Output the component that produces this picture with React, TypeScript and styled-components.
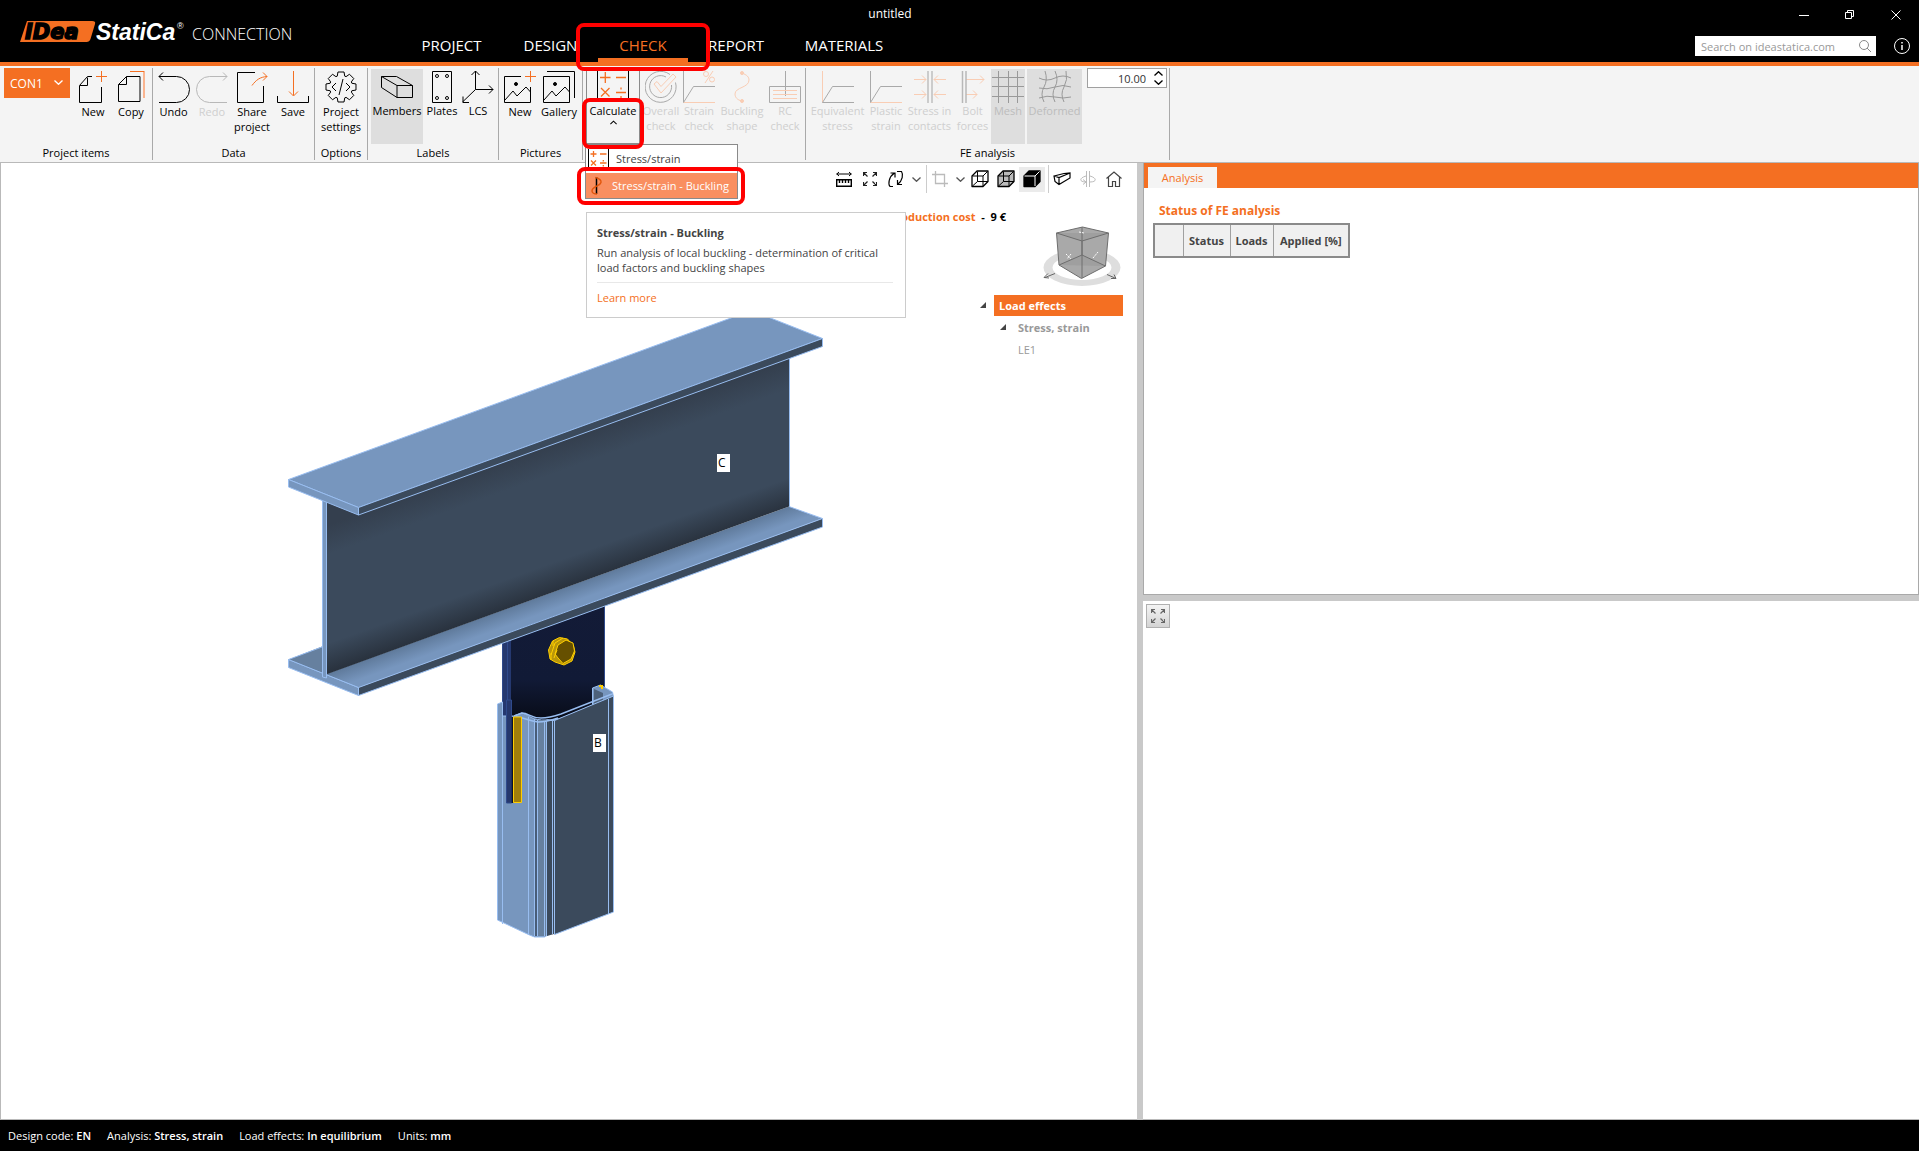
import React from "react";
import styled, { createGlobalStyle, css } from "styled-components";

const ORANGE = "#f46f22";
const PALE = "#f9cdb4";
const GREY = "#a9a9a9";

const GlobalStyle = createGlobalStyle`
  *, *::before, *::after { box-sizing: border-box; }
  body { margin: 0; background: #fff; font-family: "Open Sans", "Noto Sans", sans-serif; font-size: 11px; line-height: 15px; color: #000; }
  button, input, select { font: inherit; color: inherit; }
  button { border: 0; padding: 0; background: none; cursor: pointer; }
  a { color: inherit; text-decoration: none; }
  svg { display: block; }
`;

const Page = styled.div`
  display: flex;
  flex-direction: column;
  height: 100vh;
  overflow: hidden;
`;

/* ---------- title bar ---------- */

const Header = styled.header`
  flex: none;
  display: grid;
  grid-template-columns: 400px 1fr 539px;
  height: 66px;
  background: #000;
  color: #fff;
  border-bottom: 4px solid ${ORANGE};
`;

const Brand = styled.div`
  display: flex;
  align-items: center;
  gap: 6px;
  padding: 6px 0 0 20px;
`;

const ProductName = styled.span`
  font-size: 16px;
  line-height: 20px;
  font-weight: 300;
`;

const HeaderCentre = styled.div`
  display: flex;
  flex-direction: column;
  justify-content: space-between;
`;

const DocTitle = styled.div`
  padding-top: 6px;
  text-align: center;
  font-size: 12px;
  line-height: 16px;
`;

const Tabs = styled.nav`
  display: flex;
`;

const Tab = styled.a<{ $width: number; $active?: boolean }>`
  position: relative;
  flex: none;
  width: ${(p) => p.$width}px;
  height: 32px;
  padding-top: 4px;
  text-align: center;
  font-size: 15px;
  line-height: 22px;
  color: ${(p) => (p.$active ? ORANGE : "#fff")};
  border-bottom: 4px solid ${(p) => (p.$active ? ORANGE : "transparent")};
`;

const HeaderRight = styled.div`
  display: flex;
  flex-direction: column;
  align-items: flex-end;
`;

const WindowButtons = styled.div`
  display: flex;
`;

const WindowButton = styled.button`
  display: grid;
  place-items: center;
  width: 46px;
  height: 30px;
  color: #fff;
`;

const SearchRow = styled.div`
  display: flex;
  align-items: center;
  gap: 17px;
  padding: 6px 8px 0 0;
`;

const SearchBox = styled.label`
  display: flex;
  align-items: center;
  width: 181px;
  height: 20px;
  padding: 0 5px 0 6px;
  background: #fff;
  color: #999;
`;

const SearchInput = styled.input`
  flex: 1;
  min-width: 0;
  border: 0;
  padding: 0;
  outline: 0;
  background: none;
  &::placeholder { color: #999; opacity: 1; }
`;

/* ---------- ribbon ---------- */

const Ribbon = styled.div`
  flex: none;
  display: flex;
  height: 97px;
  padding-top: 2px;
  background: #f4f4f4;
  border-bottom: 1px solid #b9b9b9;
`;

const Group = styled.section<{ $width: number }>`
  flex: none;
  display: flex;
  flex-direction: column;
  justify-content: space-between;
  width: ${(p) => p.$width}px;
  height: 92px;
  border-right: 1px solid #a9a9a9;
`;

const GroupBody = styled.div<{ $pad?: number }>`
  display: flex;
  padding-left: ${(p) => p.$pad ?? 4}px;
`;

const GroupLabel = styled.div`
  text-align: center;
`;

const ToolButton = styled.button<{ $width: number; $active?: boolean; $disabled?: boolean; $tight?: boolean; $open?: boolean }>`
  position: relative;
  flex: none;
  display: flex;
  flex-direction: column;
  align-items: center;
  width: ${(p) => p.$width}px;
  height: 75px;
  margin-top: 1px;
  padding-top: 2px;
  gap: ${(p) => (p.$open ? 2 : p.$tight ? 0 : 1)}px;
  color: ${(p) => (p.$disabled ? (p.$active ? "#bcbcbc" : "#cfcfcf") : "#000")};
  background: ${(p) => (p.$active ? "#dedede" : "none")};
  svg { flex: none; }
  ${(p) =>
    p.$open &&
    css`
      border: solid #8a8a8a;
      border-width: 0 1px 1px;
    `}
`;

const ToolLabel = styled.span`
  white-space: pre;
  text-align: center;
`;

const Gap = styled.div<{ $width: number }>`
  flex: none;
  width: ${(p) => p.$width}px;
`;

const ItemPicker = styled.label`
  position: relative;
  width: 66px;
  height: 30px;
  color: #fff;
  background: ${ORANGE};
  svg { position: absolute; right: 7px; top: 12px; pointer-events: none; }
`;

const ItemSelect = styled.select`
  appearance: none;
  width: 100%;
  height: 100%;
  border: 0;
  padding: 0 6px;
  background: none;
  font-size: 12px;
`;

const NumberField = styled.div`
  display: flex;
  align-items: center;
  width: 80px;
  height: 20px;
  margin-left: 5px;
  padding-right: 3px;
  background: #fff;
  border: 1px solid #a0a0a0;
`;

const NumberInput = styled.input`
  flex: 1;
  min-width: 0;
  border: 0;
  padding: 0 8px 0 0;
  outline: 0;
  background: none;
  text-align: right;
  font-size: 11px;
  color: #333;
`;

const Spin = styled.div`
  display: flex;
  flex-direction: column;
  gap: 4px;
`;

/* ---------- drop-down of the Calculate button ---------- */

const CalcWrap = styled.div`
  position: relative;
  flex: none;
`;

const Menu = styled.div`
  position: absolute;
  z-index: 5;
  top: 76px;
  left: -1px;
  width: 153px;
  background: #fff;
  border: 1px solid #8a8a8a;
`;

const MenuItem = styled.button<{ $active?: boolean }>`
  position: relative;
  display: flex;
  align-items: center;
  gap: 6px;
  width: 100%;
  height: ${(p) => (p.$active ? 25 : 28)}px;
  padding: ${(p) => (p.$active ? 0 : "0 0 2px 2px")};
  white-space: nowrap;
  color: ${(p) => (p.$active ? "#fff" : "#444")};
  background: ${(p) => (p.$active ? "#f98f60" : "#fff")};
`;

const Tooltip = styled.div`
  position: absolute;
  z-index: 4;
  top: 144px;
  left: 0;
  width: 320px;
  height: 106px;
  padding: 12px 12px 0 10px;
  background: #fff;
  border: 1px solid #ccc;
  color: #444;
`;

const TipTitle = styled.div`
  font-weight: 700;
  margin-bottom: 5px;
`;

const TipText = styled.p`
  margin: 0 0 7px;
  padding-bottom: 7px;
  border-bottom: 1px solid #e8e8e8;
`;

const TipLink = styled.a`
  color: ${ORANGE};
`;

/* Red frame that marks a step of the walkthrough. */
const Callout = styled.span<{ $inset: string }>`
  position: absolute;
  z-index: 6;
  inset: ${(p) => p.$inset};
  border: 4px solid #f00;
  border-radius: 8px;
  pointer-events: none;
`;

/* ---------- work area ---------- */

const Work = styled.main`
  flex: 1;
  min-height: 0;
  display: grid;
  grid-template-columns: minmax(0, 1137fr) 6px minmax(0, 776fr);
`;

const Viewport = styled.section`
  position: relative;
  display: flex;
  flex-direction: column;
  align-items: flex-end;
  overflow: hidden;
  border-left: 1px solid #b9b9b9;
  border-bottom: 1px solid #b9b9b9;
`;

const Scene = styled.svg`
  position: absolute;
  left: 0;
  top: 0;
`;

const Splitter = styled.div`
  background: #c9c9c9;
`;

const ViewTools = styled.div`
  display: flex;
  align-items: center;
  padding-right: 10px;
  height: 32px;
`;

const ViewButton = styled.button<{ $narrow?: boolean; $active?: boolean }>`
  display: grid;
  place-items: center;
  width: ${(p) => (p.$narrow ? 14 : 26)}px;
  height: 25px;
  background: ${(p) => (p.$active ? "#ebebeb" : "none")};
`;

const Divider = styled.div`
  width: 1px;
  height: 28px;
  margin-left: 3px;
  background: #ccc;
`;

const Cost = styled.div`
  margin: 14px 131px 0 0;
  font-weight: 700;
  line-height: 16px;
  white-space: pre;
`;

const CostName = styled.span`
  color: ${ORANGE};
`;

const CubeHolder = styled.div`
  margin: 1px 15px 6px 0;
`;

const Tree = styled.ul`
  list-style: none;
  width: 143px;
  margin: 0 14px 0 0;
  padding: 0;
  line-height: 21px;
`;

const TreeRow = styled.li<{ $indent: number }>`
  display: flex;
  align-items: center;
  gap: ${(p) => (p.$indent ? 12 : 8)}px;
  height: 22px;
  padding-left: ${(p) => p.$indent}px;
  color: #999;
`;

const TreeHead = styled.span`
  flex: 1;
  padding-left: 5px;
  font-weight: 700;
  color: #fff;
  background: ${ORANGE};
`;

const TreeBold = styled.span`
  font-weight: 700;
`;

const Side = styled.aside`
  display: grid;
  grid-template-rows: 432px 6px 1fr;
  border-bottom: 1px solid #b9b9b9;
`;

const AnalysisPane = styled.section`
  border: solid #a9a9a9;
  border-width: 0 1px 1px;
`;

const PaneTabs = styled.div`
  height: 25px;
  padding: 4px 0 0 4px;
  background: ${ORANGE};
`;

const PaneTab = styled.button`
  width: 69px;
  height: 21px;
  color: ${ORANGE};
  background: #f4f4f4;
`;

const PaneTitle = styled.h2`
  margin: 14px 0 4px 15px;
  font-size: 12px;
  line-height: 17px;
  color: ${ORANGE};
`;

const StatusTable = styled.table`
  margin-left: 9px;
  border-collapse: collapse;
  border: 2px solid #8a8a8a;
  table-layout: fixed;
  width: 196px;
`;

const Th = styled.th<{ $width: number }>`
  width: ${(p) => p.$width}px;
  height: 33px;
  padding: 0;
  border: 1px solid #a0a0a0;
  color: #444;
  background: #f0f0f0;
`;

const DetailPane = styled.section`
  padding: 3px;
`;

const FitButton = styled.button`
  display: grid;
  place-items: center;
  width: 24px;
  height: 24px;
  border: 1px solid #b0b0b0;
  background: linear-gradient(#f4f4f4, #d4d4d4);
`;

const StatusBar = styled.footer`
  flex: none;
  display: flex;
  align-items: center;
  gap: 16px;
  height: 31px;
  padding-left: 8px;
  color: #fff;
  b { font-weight: 600; }
  background: #000;
`;

/* ---------- icons ---------- */

type IconProps = { w?: number; h?: number; c?: string; children: React.ReactNode };
const Icon = ({ w = 32, h = 32, c = "#000", children }: IconProps) => (
  <svg width={w} height={h} viewBox={`0 0 ${w} ${h}`} fill="none" stroke={c} aria-hidden="true">
    {children}
  </svg>
);

const Chevron = ({ up, w = 9, c = "currentColor" }: { up?: boolean; w?: number; c?: string }) => (
  <svg width={w} height={5} viewBox="0 0 9 5" fill="none" stroke={c} strokeWidth={1.3} aria-hidden="true">
    <path d={up ? "M.5 4.5 4.5.7 8.5 4.5" : "M.5.5 4.5 4.3 8.5.5"} />
  </svg>
);

const NewIcon = () => (
  <Icon>
    <path d="M24.5 16v15.500h-22v-17l8-9h4.500M3 14.500h7.500v-8" />
    <path stroke={ORANGE} d="M24.500 0v11M19 5.500h11" />
  </Icon>
);
const CopyIcon = () => (
  <Icon>
    <path d="M3.500 13.500 11.500 5.500h13.500v25h-21.500zM3.500 13.500h8v-8" />
    <path stroke={ORANGE} d="M15 .5h14.500" />
    <path stroke="#fab48f" strokeWidth="2" d="M29 1v26" />
  </Icon>
);
const UndoIcon = () => (
  <Icon>
    <path d="M1 31.500h17.500a13 13 0 0 0 0-26H1M5 1.500l-4 4 4 4" />
  </Icon>
);
const RedoIcon = () => (
  <Icon c="#b8b8b8">
    <path d="M31 31.500H13.500a13 13 0 0 1 0-26H31M27 1.500l4 4-4 4" />
  </Icon>
);
const ShareIcon = () => (
  <Icon>
    <path d="M19 1.500H1.500v30h26V15" />
    <path stroke={ORANGE} d="M16 14.500C20 9 24 6 31 5.500M27 1.500l4 4-4 4" />
  </Icon>
);
const SaveIcon = () => (
  <Icon>
    <path d="M.5 25v6.500h31V25" />
    <path stroke={ORANGE} d="M16.500 0v24.500M12 20.500l4.500 4.500 4.500-4.500" />
  </Icon>
);
const GearIcon = () => {
  const pts: string[] = [];
  for (let i = 0; i < 8; i++) {
    const a = (i * Math.PI) / 4;
    [[-0.33, 11.5], [-0.2, 15.3], [0.2, 15.3], [0.33, 11.5]].forEach(([d, r]) =>
      pts.push(`${16 + r * Math.sin(a + d)},${16 - r * Math.cos(a + d)}`)
    );
  }
  return (
    <Icon>
      <polygon points={pts.join(" ")} strokeLinejoin="round" />
      <path d="M11 12l-4 4 4 4M21 12l4 4-4 4M18 8l-4 16" />
    </Icon>
  );
};
const MemberIcon = () => (
  <Icon>
    <path d="M.5 5.500h15l16 9v12h-15.500l-15.500-10zM.5 5.500 16 14.500h15.500M16 14.500v12" />
  </Icon>
);
const PlateIcon = () => (
  <Icon>
    <path d="M6.500.500h19v31h-19z" />
    {[11, 21].map((x) => [5, 27].map((y) => <circle key={`${x}-${y}`} cx={x} cy={y} r="1.500" />))}
  </Icon>
);
const LcsIcon = () => (
  <Icon>
    <path d="M13.500 0v18.500H31M13.500 18.500 .5 31M9.500 4l4-4 4 4M27 14.500l4 4-4 4M1 25.500v6h6" />
  </Icon>
);
const PictureIcon = ({ stack }: { stack?: boolean }) => (
  <Icon>
    <path d={stack ? "M.5 5.500h26v26H.500zM4 .5h27.500V27" : "M17 5.500H.500v26h26V16"} />
    <path d="M1 29l8-9 4 5 9-9 4.500 5" />
    <circle cx="12" cy="13" r="1.500" fill="#000" />
    {!stack && <path stroke={ORANGE} d="M26.500 0v11M21 5.500h11" />}
  </Icon>
);
const CalcIcon = () => (
  <Icon w={32} h={30} c={ORANGE}>
    <path stroke="#000" d="M.5 0v30M31.500 0v30" />
    <path strokeWidth="1.300" d="M3 6.500h10.500M8.300 1v11M19 6.500h10M4 17l8.500 8.500M12.500 17l-8.500 8.500M19 21.500h10M24 16.500v2M24 25v2" />
  </Icon>
);
const CalcSmallIcon = () => (
  <Icon w={22} h={18} c={ORANGE}>
    <path stroke="#000" d="M.5 0v18M20.500 0v18" />
    <path strokeWidth="1.300" d="M2.500 5h6M5.500 2v6M12 5h6.500M3 11.500l5 5M8 11.500l-5 5M12 14h6.500M15.300 11v1.500M15.300 16v1.500" />
  </Icon>
);
const BucklingSmallIcon = () => (
  <Icon w={20} h={20} c="#e2560b">
    <path stroke="#000" strokeWidth="1.500" d="M10.500 1v17" />
    <path strokeWidth="1.400" d="M9.500 1.500c4 1 6 3 5.500 5s-3 3-5 4-4 3-4 4.500 2 3 5 3" />
  </Icon>
);
const OverallIcon = () => (
  <Icon c={GREY}>
    <path d="M25 3.500a15.500 15.500 0 1 0 5.500 8M21 6a11 11 0 1 0 5.500 8" />
    <path stroke={PALE} d="M9 13l3-2.500 4 5L28 3l3 3-15 16z" />
  </Icon>
);
const DiagramIcon = ({ v = GREY, hz = GREY, pct }: { v?: string; hz?: string; pct?: boolean }) => (
  <Icon>
    <path stroke={v} d="M.5 0v31.500" />
    <path stroke={hz} d="M.5 31.500H32" />
    <path stroke={GREY} d="M.5 31.500 10.500 15.500H32" />
    {pct && (
      <g stroke={PALE}>
        <circle cx="23" cy="3" r="2.500" />
        <circle cx="29" cy="8.500" r="2.500" />
        <path d="M30 0 22 12" />
      </g>
    )}
  </Icon>
);
const BucklingIcon = () => (
  <Icon c={PALE}>
    <path d="M16 2c5 2 7 4 7 7 0 8-14 7-14 14 0 3 2 6 7 7" />
    <circle cx="16" cy="2" r="1.500" fill={PALE} />
    <circle cx="16" cy="30" r="1.500" fill={PALE} />
  </Icon>
);
const RcIcon = () => (
  <Icon c={GREY}>
    <path d="M.5 15.500h31v16H.500zM16.500 0v25" />
    <path stroke={PALE} d="M4 19.500h24M4 23.500h24M4 27.500h24" />
  </Icon>
);
const ContactIcon = () => (
  <Icon c={PALE}>
    <path d="M0 8.500h12M8 4.500l4 4-4 4M0 23.500h12M8 19.500l4 4-4 4M32 8.500H20M24 4.500l-4 4 4 4M32 23.500H20M24 19.500l-4 4 4 4" />
    <path stroke="#ccc" strokeWidth="2" d="M14 0v32M18 0v32" />
  </Icon>
);
const BoltIcon = () => (
  <Icon c={PALE}>
    <path d="M9 8.500h18M23 4.500l4 4-4 4M9 23.500h11M16 19.500l4 4-4 4" />
    <path stroke="#b8b8b8" strokeWidth="1.500" d="M5.500 0v32M9 0v32" />
  </Icon>
);
const MeshIcon = () => (
  <Icon c="#999">
    <path d="M0 6.500h32M0 15.500h32M0 25.500h32M6.500 0v32M16.500 0v32M25.500 0v32" />
  </Icon>
);
const DeformedIcon = () => (
  <Icon c="#999">
    <path d="M0 7q8 4 16 0t16 0M0 17q8 2 16-1t16 0M0 27q8-3 16-1t16 0M6 0q3 9-1 16t0 15M16 0q4 9 0 16t0 15M27 0q2 9-2 16t0 15" />
  </Icon>
);

const FitIcon = ({ c = "#222" }: { c?: string }) => (
  <Icon w={14} h={14} c={c}>
    <path strokeWidth="1.200" d="M.5 4V.500H4M.5.500 4.500 4.500M10 .5h3.500V4M13.500.500 9.500 4.500M.5 10v3.500H4M.5 13.500l4-4M10 13.500h3.500V10M13.500 13.500l-4-4" />
  </Icon>
);
const RulerIcon = () => (
  <Icon w={16} h={16}>
    <path d="M.5 3h15M3 1 .8 3 3 5M13 1l2.200 2L13 5" />
    <path strokeWidth="1.400" d="M.7 8.700h14.600v6.600H.700zM3.500 9v3M6.500 9v3M9.500 9v3M12.500 9v3" />
  </Icon>
);
const RotateIcon = () => (
  <Icon w={18} h={18}>
    <path strokeWidth="1.200" d="M6 16.500H3C1 14 1.500 7 7.500 3M3.500 3H8v4.500M10 1.500h4.500c2 3 1 9-3.500 12.500M15 14.500h-4.500V10" />
  </Icon>
);
const CropIcon = () => (
  <Icon w={16} h={16} c="#bbb">
    <path strokeWidth="1.300" d="M3.500 0v12.500H16M0 3.500h12.500V16" />
  </Icon>
);
const CubeIcon = ({ fill = "none", solid }: { fill?: string; solid?: boolean }) => (
  <Icon w={18} h={18}>
    <path fill={solid ? "#000" : fill} strokeWidth="1.300" strokeLinejoin="round" d="M1 6 6 1h11v10.500L12 16.500H1z" />
    <path stroke={solid ? "#fff" : "#000"} d="M1.500 6H12v10M12 6l4.500-4.500" />
    {!solid && <path d="M6.500 1.500v10H17M6.500 11.500l-5 4.500" />}
  </Icon>
);
const SectionIcon = () => (
  <Icon w={18} h={16}>
    <path strokeWidth="1.200" d="M1 5 11 2.500l6-.5v5L6 13.500l-4-3zM1 5l5 1.500 11-4.500M6 6.500v7" />
  </Icon>
);
const MirrorIcon = () => (
  <Icon w={16} h={16} c="#bbb">
    <path d="M6.500 0v16M9.500 0v16M6 5C-1 7-1 11 6 11M10 5c7 2 7 6 0 6M3 8.500 6 11l-3 2.500" />
  </Icon>
);
const HomeIcon = () => (
  <Icon w={16} h={16} c="#444">
    <path strokeWidth="1.200" d="M.5 7.500 8 1l7.500 6.500M2.500 6v9.500h4v-5h3v5h4V6" />
  </Icon>
);

const NavCube = () => (
  <svg width="80" height="62" viewBox="1042 226 80 62" fill="none" aria-hidden="true">
    <path fill="#dedede" fillRule="evenodd" d="M1043.500 267.500a38.500 18.500 0 0 1 77 0a38.500 18.500 0 0 1-77 0zM1052.500 267.500a29.500 12.500 0 0 0 59 0a29.500 12.500 0 0 0-59 0z" />
    <path fill="#a9a9a9" stroke="#6e6e6e" d="M1056.500 233l26-6 26 6-3 33-24 12.500-22.500-13.500z" />
    <path fill="#9f9f9f" stroke="#6e6e6e" d="M1056.500 233l25.500 8 26.500-8M1082 241v37M1082 227v28M1059 265l23-10 23.500 11" />
    <path stroke="#fff" strokeDasharray="2 1" d="M1079 232l5 1M1066 254l5 5M1071 254l-4 5M1093 258l5-6" />
    <path stroke="#666" d="M1055 273.500l-10 4M1048 273.500l-4 4 5 .500M1107 274.500l9 4M1111 278.500h5l-2-4" />
  </svg>
);

const Twisty = () => (
  <svg width="6" height="6" viewBox="0 0 6 6" aria-hidden="true">
    <path fill="#444" d="M6 0v6H0z" />
  </svg>
);

const Logo = () => (
  <svg width="166" height="28" viewBox="0 0 166 28" role="img" aria-label="IDEA StatiCa">
    <path fill={ORANGE} d="M7 1h65q4 0 3 3L70.500 19q-1 3-4 3H0z" />
    <text x="5" y="19" fontFamily="DejaVu Sans" fontWeight="700" fontStyle="italic" fontSize="21" stroke="#000" strokeWidth="1.500">IDea</text>
    <text x="76" y="20" fill="#fff" fontFamily="Liberation Sans" fontWeight="700" fontStyle="italic" fontSize="23">StatiCa</text>
    <text x="157" y="9" fill="#fff" fontFamily="Liberation Sans" fontSize="9">®</text>
  </svg>
);

/* ---------- 3D model ---------- */

const EDGE = "#98bdf0";

const Model = () => (
  <Scene width="1136" height="956" viewBox="1 163 1136 956" role="img" aria-label="Beam and column connection">
    <defs>
      <linearGradient id="web" gradientUnits="userSpaceOnUse" x1="540" y1="449" x2="587" y2="580">
        <stop offset="0" stopColor="#343f4e" />
        <stop offset=".2" stopColor="#3b4a5c" />
        <stop offset=".8" stopColor="#3b4a5c" />
        <stop offset="1" stopColor="#29323e" />
      </linearGradient>
      <linearGradient id="flange" gradientUnits="userSpaceOnUse" x1="550" y1="593" x2="558" y2="615">
        <stop offset="0" stopColor="#5f7a9b" />
        <stop offset=".7" stopColor="#7796be" />
      </linearGradient>
      <linearGradient id="plate" x1="0" y1="0" x2="0" y2="1">
        <stop offset="0" stopColor="#131b37" />
        <stop offset=".65" stopColor="#111a36" />
        <stop offset="1" stopColor="#070a14" />
      </linearGradient>
    </defs>

    {/* connecting plate */}
    <path fill="#25386f" stroke="#2f4a8c" d="M502.500 636v85l4 4v74l5 1V632z" />
    <path fill="url(#plate)" d="M511 630 605 596v114L530 725H511z" />
    <path stroke="#2f4a8c" d="M604.500 600v90M507.500 636v94" />

    {/* column */}
    <path fill="#7796be" stroke={EDGE} d="M497.500 704l5-2v14h11l8-3c7 1 8 6 20 7h8v214l-5 3h-10l-5-2-32-15z" />
    <path fill="#7796be" stroke={EDGE} d="M592.500 706v-18l8-3 12 7 1 5-59 24-8-1c10 0 12-1 18-3z" />
    <path fill="#4d617a" d="M594 705v-16l9 4v9z" />
    <path fill="#3b4a5c" stroke={EDGE} d="M554.500 720.500 613.500 696v216l-59 22.500z" />
    <path fill="#66809f" d="M537 720h10v216h-10z" />
    <path fill="#3b4a5c" d="M547 721h7v213l-7 2z" />
    <path fill="none" stroke={EDGE} d="M502.500 716v208M528.500 717v218M534.500 719v217M537.500 720v216M544.500 721v215M546.500 721v215M552.500 721v213M608.500 699v215" />
    <path stroke="#1d2530" d="M536 720v216" />
    <path fill="none" stroke={EDGE} strokeWidth="1.500" d="M514 716l8-3c7 0 8 5 19 5 8 0 14-2 20-4l51-20M516 717c8 0 12 4 22 5 8 0 14-2 20-4" />
    <path fill="#26386d" stroke="#2f4a8c" d="M506.500 700h5v103h-5z" />
    <path stroke="#0c1228" strokeWidth="2" d="M512.500 717v86" />
    <path fill="#a17f0b" stroke="#ffce00" d="M513.500 717h8v85.500h-8z" />
    <path stroke="#ffce00" strokeWidth="2" d="M599 686h3v3" fill="none" />

    {/* bolt */}
    <path fill="#b8960a" stroke="#ffce00" strokeLinejoin="round" d="M548.500 650l4-9 7-3.500 8 1.500 6 7 1.500 6-3 9-8 4-9-3-5-3z" />
    <path fill="#665000" stroke="#ffce00" d="M558 645l8-5 7 3 1.500 8-3.500 8-8 4.500-5-5.500-3-4z" />
    <path fill="none" stroke="#ffce00" d="M551 655l4-12 8-5M553 641v5M551 660v-7M554 658l3-8" />

    {/* beam */}
    <path fill="#7796be" stroke={EDGE} d="M288.500 659.500 358.500 687.500v8L288.500 667.500z" />
    <path fill="url(#flange)" d="M288.500 659.500 322 646.500 326 674 789 506.500 822 518.500 358.500 687.500z" />
    <path fill="#66809f" d="M289 659.500 322 647v25z" />
    <path fill="#3b4a5c" stroke={EDGE} d="M358.500 687.500 822.500 518.500v8.500l-464 168.500z" />
    <path fill="none" stroke={EDGE} d="M789 506.500l33.500 12M322 647l-33.500 12.500 70 28" />
    <path fill="url(#web)" d="M326 500 789 340v166.500L326 674.500z" />
    <path stroke={EDGE} d="M789.500 356v150.500" />
    <path fill="#7796be" stroke={EDGE} d="M322.500 494h4v184l-4-1z" />
    <path fill="#7796be" stroke={EDGE} d="M288.500 479.500 751.500 310.500 822.500 338.500 358.500 507.500z" />
    <path fill="#7796be" stroke={EDGE} d="M288.500 479.500 358.500 507.500v7.500L288.500 487z" />
    <path fill="#3b4a5c" stroke={EDGE} d="M358.500 507.500 822.500 338.500v8l-464 168.500z" />

    {/* member labels */}
    <path fill="#fff" d="M717 454h13v18h-13zM593 734h13v18h-13z" />
    <text x="718" y="467" fontSize="12" fontFamily="Open Sans">C</text>
    <text x="594" y="747" fontSize="12" fontFamily="Open Sans">B</text>
  </Scene>
);

/* ---------- page ---------- */

type ToolProps = {
  icon: React.ReactNode;
  label: string;
  width: number;
  active?: boolean;
  disabled?: boolean;
  tight?: boolean;
};
const Tool = ({ icon, label, width, active, disabled, tight }: ToolProps) => (
  <ToolButton $width={width} $active={active} $disabled={disabled} $tight={tight} disabled={disabled}>
    {icon}
    <ToolLabel>{label}</ToolLabel>
  </ToolButton>
);

export default function App() {
  return (
    <Page>
      <GlobalStyle />
      <Header>
        <Brand>
          <Logo />
          <ProductName>CONNECTION</ProductName>
        </Brand>
        <HeaderCentre>
          <DocTitle>untitled</DocTitle>
          <Tabs>
            <Tab href="#project" $width={103}>PROJECT</Tab>
            <Tab href="#design" $width={95}>DESIGN</Tab>
            <Tab href="#check" $width={90} $active>
              CHECK
              <Callout $inset="-7px -22px -13px" />
            </Tab>
            <Tab href="#report" $width={96}>REPORT</Tab>
            <Tab href="#materials" $width={120}>MATERIALS</Tab>
          </Tabs>
        </HeaderCentre>
        <HeaderRight>
          <WindowButtons>
            <WindowButton aria-label="Minimize">
              <Icon w={10} h={10} c="#fff"><path d="M0 5.500h10" /></Icon>
            </WindowButton>
            <WindowButton aria-label="Restore">
              <Icon w={10} h={10} c="#fff"><path d="M.5 2.500h6v6h-6zM2.500 2V.500h6v6H7" /></Icon>
            </WindowButton>
            <WindowButton aria-label="Close">
              <Icon w={10} h={10} c="#fff"><path d="M.5.500l9 9M9.500.500l-9 9" /></Icon>
            </WindowButton>
          </WindowButtons>
          <SearchRow>
            <SearchBox>
              <SearchInput aria-label="Search" placeholder="Search on ideastatica.com" />
              <Icon w={12} h={12} c="#888"><circle cx="5" cy="5" r="4.500" /><path d="M8 8l4 4" /></Icon>
            </SearchBox>
            <button aria-label="About">
              <Icon w={18} h={18} c="#fff"><circle cx="9" cy="9" r="7.500" /><path strokeWidth="1.500" d="M9 8v5M9 5v1.500" /></Icon>
            </button>
          </SearchRow>
        </HeaderRight>
      </Header>

      <Ribbon>
        <Group $width={153}>
          <GroupBody>
            <ItemPicker>
              <ItemSelect aria-label="Project item"><option>CON1</option></ItemSelect>
              <Chevron />
            </ItemPicker>
            <Gap $width={4} />
            <Tool icon={<NewIcon />} label="New" width={38} />
            <Tool icon={<CopyIcon />} label="Copy" width={38} />
          </GroupBody>
          <GroupLabel>Project items</GroupLabel>
        </Group>
        <Group $width={162}>
          <GroupBody $pad={1}>
            <Tool icon={<UndoIcon />} label="Undo" width={39} />
            <Tool icon={<RedoIcon />} label="Redo" width={38} disabled />
            <Tool icon={<ShareIcon />} label={"Share\nproject"} width={42} />
            <Tool icon={<SaveIcon />} label="Save" width={40} />
          </GroupBody>
          <GroupLabel>Data</GroupLabel>
        </Group>
        <Group $width={53}>
          <GroupBody $pad={3}>
            <Tool icon={<GearIcon />} label={"Project\nsettings"} width={46} />
          </GroupBody>
          <GroupLabel>Options</GroupLabel>
        </Group>
        <Group $width={131}>
          <GroupBody $pad={3}>
            <Tool icon={<MemberIcon />} label="Members" width={52} active tight />
            <Tool icon={<PlateIcon />} label="Plates" width={38} tight />
            <Tool icon={<LcsIcon />} label="LCS" width={34} tight />
          </GroupBody>
          <GroupLabel>Labels</GroupLabel>
        </Group>
        <Group $width={84}>
          <GroupBody $pad={2}>
            <Tool icon={<PictureIcon />} label="New" width={38} />
            <Tool icon={<PictureIcon stack />} label="Gallery" width={40} />
          </GroupBody>
          <GroupLabel>Pictures</GroupLabel>
        </Group>
        <Group $width={223}>
          <GroupBody $pad={3}>
            <CalcWrap>
              <ToolButton $width={54} $tight $open aria-haspopup="menu" aria-expanded>
                <CalcIcon />
                <ToolLabel>Calculate</ToolLabel>
                <Chevron up w={7} />
                <Callout $inset="29px -5px -6px" />
              </ToolButton>
              <Menu role="menu">
                <MenuItem role="menuitem">
                  <CalcSmallIcon />
                  Stress/strain
                </MenuItem>
                <MenuItem role="menuitem" $active>
                  <BucklingSmallIcon />
                  Stress/strain - Buckling
                  <Callout $inset="-6px -8px -7px -9px" />
                </MenuItem>
              </Menu>
              <Tooltip role="tooltip">
                <TipTitle>Stress/strain - Buckling</TipTitle>
                <TipText>Run analysis of local buckling - determination of critical load factors and buckling shapes</TipText>
                <TipLink href="#learn">Learn more</TipLink>
              </Tooltip>
            </CalcWrap>
            <Gap $width={2} />
            <Tool icon={<OverallIcon />} label={"Overall\ncheck"} width={38} disabled tight />
            <Tool icon={<DiagramIcon hz={PALE} pct />} label={"Strain\ncheck"} width={38} disabled tight />
            <Tool icon={<BucklingIcon />} label={"Buckling\nshape"} width={48} disabled tight />
            <Tool icon={<RcIcon />} label={"RC\ncheck"} width={38} disabled tight />
          </GroupBody>
        </Group>
        <Group $width={364}>
          <GroupBody $pad={2}>
            <Tool icon={<DiagramIcon v={PALE} />} label={"Equivalent\nstress"} width={59} disabled tight />
            <Tool icon={<DiagramIcon hz={PALE} />} label={"Plastic\nstrain"} width={38} disabled tight />
            <Tool icon={<ContactIcon />} label={"Stress in\ncontacts"} width={49} disabled tight />
            <Tool icon={<BoltIcon />} label={"Bolt\nforces"} width={37} disabled tight />
            <Tool icon={<MeshIcon />} label="Mesh" width={34} active disabled tight />
            <Gap $width={2} />
            <Tool icon={<DeformedIcon />} label="Deformed" width={55} active disabled tight />
            <NumberField>
              <NumberInput aria-label="Deformation scale" defaultValue="10.00" />
              <Spin><Chevron up /><Chevron /></Spin>
            </NumberField>
          </GroupBody>
          <GroupLabel>FE analysis</GroupLabel>
        </Group>
      </Ribbon>

      <Work>
        <Viewport>
          <Model />
          <ViewTools>
            <ViewButton aria-label="Measure"><RulerIcon /></ViewButton>
            <ViewButton aria-label="Zoom to fit"><FitIcon /></ViewButton>
            <ViewButton aria-label="Rotate"><RotateIcon /></ViewButton>
            <ViewButton aria-label="Rotate options" $narrow><Chevron c="#555" /></ViewButton>
            <Divider />
            <ViewButton aria-label="Crop"><CropIcon /></ViewButton>
            <ViewButton aria-label="Crop options" $narrow><Chevron c="#555" /></ViewButton>
            <ViewButton aria-label="Wireframe"><CubeIcon /></ViewButton>
            <ViewButton aria-label="Transparent"><CubeIcon fill="#bbb" /></ViewButton>
            <ViewButton aria-label="Solid" $active><CubeIcon solid /></ViewButton>
            <Divider />
            <ViewButton aria-label="Section"><SectionIcon /></ViewButton>
            <ViewButton aria-label="Mirror"><MirrorIcon /></ViewButton>
            <ViewButton aria-label="Home view"><HomeIcon /></ViewButton>
          </ViewTools>
          <Cost><CostName>Production cost</CostName>  -  9 €</Cost>
          <CubeHolder><NavCube /></CubeHolder>
          <Tree>
            <TreeRow $indent={0}><Twisty /><TreeHead>Load effects</TreeHead></TreeRow>
            <TreeRow $indent={20}><Twisty /><TreeBold>Stress, strain</TreeBold></TreeRow>
            <TreeRow $indent={38}>LE1</TreeRow>
          </Tree>
        </Viewport>
        <Splitter />
        <Side>
          <AnalysisPane>
            <PaneTabs><PaneTab>Analysis</PaneTab></PaneTabs>
            <PaneTitle>Status of FE analysis</PaneTitle>
            <StatusTable>
              <thead>
                <tr>
                  <Th $width={29} aria-label="Item" />
                  <Th $width={47}>Status</Th>
                  <Th $width={43}>Loads</Th>
                  <Th $width={76}>Applied [%]</Th>
                </tr>
              </thead>
            </StatusTable>
          </AnalysisPane>
          <Splitter />
          <DetailPane>
            <FitButton aria-label="Fit view"><FitIcon c="#666" /></FitButton>
          </DetailPane>
        </Side>
      </Work>

      <StatusBar>
        <span>Design code: <b>EN</b></span>
        <span>Analysis: <b>Stress, strain</b></span>
        <span>Load effects: <b>In equilibrium</b></span>
        <span>Units: <b>mm</b></span>
      </StatusBar>
    </Page>
  );
}
